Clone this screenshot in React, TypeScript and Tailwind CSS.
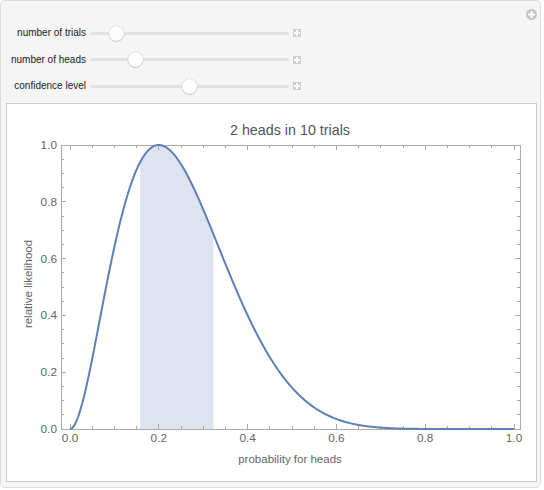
import React from "react";

const sliders = [
  { label: "number of trials", pos: 116 },
  { label: "number of heads", pos: 135 },
  { label: "confidence level", pos: 189 },
];

// page coordinates of the plot frame
const X0 = 70;
const X1 = 514;
const Y0 = 429;
const Y1 = 145;
const sx = (p: number) => X0 + (X1 - X0) * p;
const sy = (v: number) => Y0 - (Y0 - Y1) * v;

const lik = (p: number) => (p * p * Math.pow(1 - p, 8)) / (0.04 * Math.pow(0.8, 8));

const curvePath = () => {
  const pts: string[] = [];
  for (let i = 0; i <= 400; i++) {
    const p = i / 400;
    pts.push(`${sx(p).toFixed(2)},${sy(lik(p)).toFixed(2)}`);
  }
  return "M" + pts.join(" L");
};

const shadePath = (a: number, b: number) => {
  const pts: string[] = [`${sx(a)},${Y0}`];
  for (let i = 0; i <= 80; i++) {
    const p = a + ((b - a) * i) / 80;
    pts.push(`${sx(p).toFixed(2)},${sy(lik(p)).toFixed(2)}`);
  }
  pts.push(`${sx(b)},${Y0}`);
  return "M" + pts.join(" L") + " Z";
};

const PlusBox = () => (
  <svg width={8} height={8} viewBox="0 0 8 8" className="block">
    <rect width={8} height={8} fill="#cfcfcf" />
    <rect x={3} y={1} width={2} height={6} fill="#fff" />
    <rect x={1} y={3} width={6} height={2} fill="#fff" />
  </svg>
);

const PlusCircle = () => (
  <svg width={11} height={11} viewBox="0 0 11 11" className="block">
    <circle cx={5.5} cy={5.5} r={5.5} fill="#c4c4c4" />
    <rect x={4.5} y={2} width={2} height={7} fill="#fff" />
    <rect x={2} y={4.5} width={7} height={2} fill="#fff" />
  </svg>
);

const Slider = ({ label, pos }: { label: string; pos: number }) => (
  <div className="flex items-center h-[26.5px]">
    <div className="w-[85px] text-right text-[10px] text-[#222] leading-none">{label}</div>
    <div className="ml-[4px] w-[199px] h-[3px] bg-[#e2e2e2] rounded-full relative">
      <div
        className="absolute top-[-6px] w-[15px] h-[15px] rounded-full bg-white shadow-[0_0_1px_rgba(0,0,0,0.35),0_1px_1px_rgba(0,0,0,0.12)]"
        style={{ left: pos - 90 - 7.5 }}
      />
    </div>
    <div className="ml-[4px]">
      <PlusBox />
    </div>
  </div>
);

const Plot = () => {
  const fl = 61;
  const fr = 520;
  const ticks: React.ReactNode[] = [];
  for (let i = 0; i <= 20; i++) {
    const v = i * 0.05;
    const major = i % 4 === 0;
    const len = major ? 5 : 3;
    const x = sx(v);
    if (x <= fr) {
      ticks.push(<line key={`b${i}`} x1={x} x2={x} y1={Y0} y2={Y0 - len} />);
      ticks.push(<line key={`t${i}`} x1={x} x2={x} y1={Y1} y2={Y1 + len} />);
    }
    const y = sy(v);
    ticks.push(<line key={`l${i}`} x1={fl} x2={fl + len} y1={y} y2={y} />);
    ticks.push(<line key={`r${i}`} x1={fr} x2={fr - len} y1={y} y2={y} />);
  }
  const labels = [0, 0.2, 0.4, 0.6, 0.8, 1.0];
  return (
    <svg width={529} height={377} className="block" style={{ fontFamily: '"Liberation Sans", Arial, sans-serif' }}>
      <g transform="translate(-7,-104)">
        <path d={shadePath(0.158, 0.323)} fill="#dee4ef" />
        <g stroke="#a9a9a9" strokeWidth={1} shapeRendering="crispEdges">
          <rect x={fl + 0.5} y={Y1 + 0.5} width={fr - fl} height={Y0 - Y1} fill="none" />
          {ticks}
        </g>
        <path d={curvePath()} fill="none" stroke="#5e81b5" strokeWidth={2} strokeLinejoin="round" />
        <g fill="#666" fontSize={11.8}>
          {labels.map((v) => (
            <text key={`x${v}`} x={sx(v)} y={442} textAnchor="middle">
              {v.toFixed(1)}
            </text>
          ))}
          {labels.map((v) => (
            <text key={`y${v}`} x={57} y={sy(v) + 4} textAnchor="end">
              {v.toFixed(1)}
            </text>
          ))}
          <text x={290} y={463} textAnchor="middle" fontSize={11.5}>
            probability for heads
          </text>
          <text x={0} y={0} textAnchor="middle" fontSize={11.5} transform="translate(32,284) rotate(-90)">
            relative likelihood
          </text>
        </g>
        <text x={290} y={135} textAnchor="middle" fontSize={14.3} fill="#555">
          2 heads in 10 trials
        </text>
      </g>
    </svg>
  );
};

export default function App() {
  return (
    <div className="w-[544px] h-[490px] bg-white font-['Liberation_Sans',Arial,sans-serif]">
      <div className="w-[541px] h-[488px] bg-[#f5f5f5] border border-[#dcdcdc] rounded-[5px] flex flex-col">
        <div className="h-[19px] flex justify-end pt-[8px] pr-[3px]">
          <PlusCircle />
        </div>
        <div className="h-[83px] flex flex-col">
          {sliders.map((s) => (
            <Slider key={s.label} label={s.label} pos={s.pos} />
          ))}
        </div>
        <div className="ml-[5px] w-[531px] h-[379px] bg-white border border-[#cacaca]">
          <Plot />
        </div>
      </div>
    </div>
  );
}
